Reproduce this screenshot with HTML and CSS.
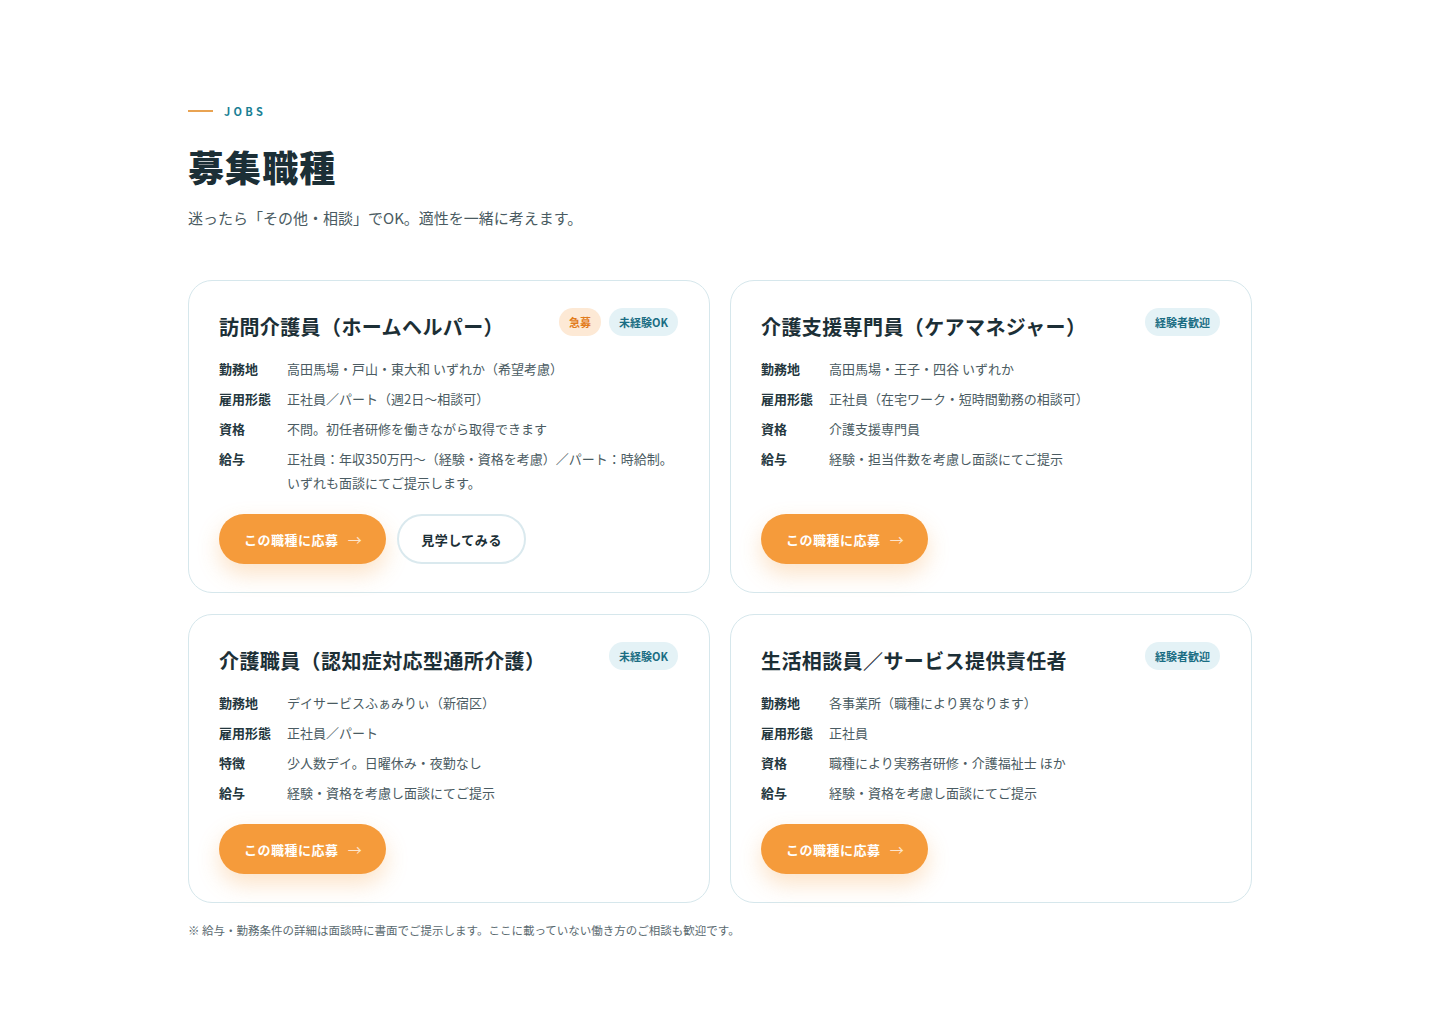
FILE: index.html
```html
<!DOCTYPE html>
<html lang="ja">
<head>
<meta charset="utf-8">
<title>募集職種</title>
<link rel="stylesheet" href="styles.css">
</head>
<body>
<section class="jobs">
  <div class="eyebrow"><span class="eyebrow-line"></span><span class="eyebrow-text">JOBS</span></div>
  <h1 class="title">募集職種</h1>
  <p class="lead">迷ったら「その他・相談」でOK。適性を一緒に考えます。</p>

  <div class="grid">
    <article class="card">
      <div class="card-head">
        <h2 class="card-title">訪問介護員（ホームヘルパー）</h2>
        <div class="badges"><span class="badge badge-urgent">急募</span><span class="badge">未経験OK</span></div>
      </div>
      <dl class="rows">
        <div class="row"><dt>勤務地</dt><dd>高田馬場・戸山・東大和 いずれか（希望考慮）</dd></div>
        <div class="row"><dt>雇用形態</dt><dd>正社員／パート（週2日〜相談可）</dd></div>
        <div class="row"><dt>資格</dt><dd>不問。初任者研修を働きながら取得できます</dd></div>
        <div class="row"><dt>給与</dt><dd>正社員：年収350万円〜（経験・資格を考慮）／パート：時給制。いずれも面談にてご提示します。</dd></div>
      </dl>
      <div class="actions">
        <a class="btn btn-apply" href="#">この職種に応募<span class="arrow">→</span></a>
        <a class="btn btn-visit" href="#">見学してみる</a>
      </div>
    </article>

    <article class="card">
      <div class="card-head">
        <h2 class="card-title">介護支援専門員（ケアマネジャー）</h2>
        <div class="badges"><span class="badge">経験者歓迎</span></div>
      </div>
      <dl class="rows">
        <div class="row"><dt>勤務地</dt><dd>高田馬場・王子・四谷 いずれか</dd></div>
        <div class="row"><dt>雇用形態</dt><dd>正社員（在宅ワーク・短時間勤務の相談可）</dd></div>
        <div class="row"><dt>資格</dt><dd>介護支援専門員</dd></div>
        <div class="row"><dt>給与</dt><dd>経験・担当件数を考慮し面談にてご提示</dd></div>
      </dl>
      <div class="actions">
        <a class="btn btn-apply" href="#">この職種に応募<span class="arrow">→</span></a>
      </div>
    </article>

    <article class="card">
      <div class="card-head">
        <h2 class="card-title">介護職員（認知症対応型通所介護）</h2>
        <div class="badges"><span class="badge">未経験OK</span></div>
      </div>
      <dl class="rows">
        <div class="row"><dt>勤務地</dt><dd>デイサービスふぁみりぃ（新宿区）</dd></div>
        <div class="row"><dt>雇用形態</dt><dd>正社員／パート</dd></div>
        <div class="row"><dt>特徴</dt><dd>少人数デイ。日曜休み・夜勤なし</dd></div>
        <div class="row"><dt>給与</dt><dd>経験・資格を考慮し面談にてご提示</dd></div>
      </dl>
      <div class="actions">
        <a class="btn btn-apply" href="#">この職種に応募<span class="arrow">→</span></a>
      </div>
    </article>

    <article class="card">
      <div class="card-head">
        <h2 class="card-title">生活相談員／サービス提供責任者</h2>
        <div class="badges"><span class="badge">経験者歓迎</span></div>
      </div>
      <dl class="rows">
        <div class="row"><dt>勤務地</dt><dd>各事業所（職種により異なります）</dd></div>
        <div class="row"><dt>雇用形態</dt><dd>正社員</dd></div>
        <div class="row"><dt>資格</dt><dd>職種により実務者研修・介護福祉士 ほか</dd></div>
        <div class="row"><dt>給与</dt><dd>経験・資格を考慮し面談にてご提示</dd></div>
      </dl>
      <div class="actions">
        <a class="btn btn-apply" href="#">この職種に応募<span class="arrow">→</span></a>
      </div>
    </article>
  </div>

  <p class="note">※ 給与・勤務条件の詳細は面談時に書面でご提示します。ここに載っていない働き方のご相談も歓迎です。</p>
</section>
</body>
</html>
```

FILE: styles.css
```css
* { box-sizing: border-box; }
html, body { margin: 0; padding: 0; background: #ffffff; }
body {
  font-family: "Noto Sans CJK JP", "Noto Sans", sans-serif;
  color: #1c2f36;
}
.jobs {
  width: 1064px;
  margin: 0 auto;
  padding-top: 103px;
  padding-bottom: 60px;
}
.eyebrow {
  display: flex;
  align-items: center;
  gap: 11px;
  height: 16px;
}
.eyebrow-line {
  width: 25px;
  height: 2px;
  background: #e9a352;
}
.eyebrow-text {
  font-size: 11px;
  font-weight: 700;
  letter-spacing: 0.3em;
  color: #1a7f95;
  line-height: 16px;
}
.title {
  margin: 22px 0 0;
  font-size: 36px;
  line-height: 50px;
  font-weight: 900;
  letter-spacing: 0.03em;
  color: #1c2f36;
}
.lead {
  margin: 15px 0 0;
  font-size: 15px;
  line-height: 24px;
  color: #4a5b62;
}
.grid {
  margin-top: 50px;
  display: grid;
  grid-template-columns: 1fr 1fr;
  gap: 21px 20px;
}
.card {
  border: 1px solid #d6e7ec;
  border-radius: 24px;
  padding: 27px 31px 28px;
  display: flex;
  flex-direction: column;
  background: #fff;
}
.card-head {
  display: flex;
  justify-content: space-between;
  align-items: flex-start;
  gap: 12px;
}
.card-title {
  margin: 4px 0 0 -1px;
  font-size: 20px;
  line-height: 30px;
  font-weight: 700;
  letter-spacing: 0.02em;
  color: #1c2f36;
}
.badges {
  display: flex;
  gap: 8px;
  flex-shrink: 0;
}
.badge {
  height: 28px;
  padding: 0 10px;
  border-radius: 14px;
  background: #e4f2f6;
  color: #1a6d83;
  font-size: 11px;
  font-weight: 700;
  line-height: 28px;
  white-space: nowrap;
}
.badge-urgent {
  background: #fde9d5;
  color: #e27c1c;
}
.rows {
  margin: 15px 0 0 -1px;
  display: flex;
  flex-direction: column;
  gap: 6px;
}
.row {
  display: grid;
  grid-template-columns: 68px 1fr;
  font-size: 13px;
  line-height: 24px;
}
.row dt {
  font-weight: 700;
  color: #24373e;
}
.row dd {
  margin: 0;
  color: #4a5b62;
}
.actions {
  margin-top: auto;
  margin-left: -1px;
  padding-top: 19px;
  display: flex;
  gap: 11px;
}
.btn {
  height: 50px;
  border-radius: 25px;
  display: inline-flex;
  align-items: center;
  font-size: 13px;
  font-weight: 700;
  letter-spacing: 0.04em;
  text-decoration: none;
  white-space: nowrap;
}
.btn-apply {
  padding: 0 24px 0 25px;
  background: #f59b3b;
  color: #ffffff;
  box-shadow: 0 10px 22px rgba(245, 155, 59, 0.28);
}
.arrow {
  margin-left: 9px;
  color: rgba(255, 255, 255, 0.75);
  font-weight: 400;
  font-size: 14px;
}
.btn-visit {
  padding: 0 22px;
  border: 2px solid #dae9ee;
  background: #ffffff;
  color: #1c2f36;
}
.note {
  margin: 18px 0 0;
  font-size: 11.5px;
  line-height: 18px;
  color: #5a6a70;
}
```
